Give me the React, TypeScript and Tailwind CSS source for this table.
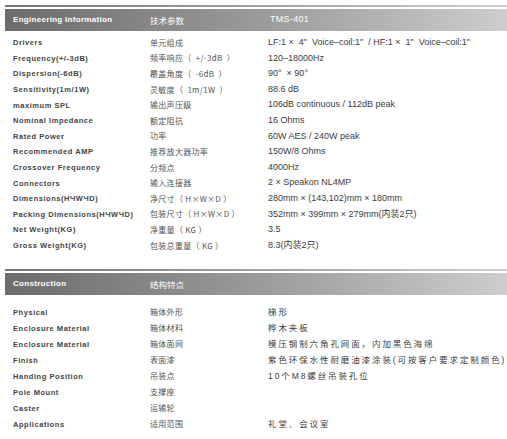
const specs: [string, string, string][] = [
  ["Drivers", "单元组成", "LF:1 ×  4\"  Voice–coil:1\"  / HF:1 ×  1\"  Voice–coil:1\""],
  ["Frequency(+/-3dB)", "频率响应（  +/-3dB  ）", "120–18000Hz"],
  ["Dispersion(-6dB)", "覆盖角度（  -6dB  ）", "90°  × 90°"],
  ["Sensitivity(1m/1W)", "灵敏度（  1m/1W  ）", "88.6 dB"],
  ["maximum SPL", "输出声压级", "106dB continuous / 112dB peak"],
  ["Nominal Impedance", "额定阻抗", "16 Ohms"],
  ["Rated Power", "功率", "60W AES / 240W peak"],
  ["Recommended  AMP", "推荐放大器功率", "150W/8 Ohms"],
  ["Crossover Frequency", "分频点", "4000Hz"],
  ["Connectors", "输入连接器", "2 × Speakon NL4MP"],
  ["Dimensions(HЧWЧD)", "净尺寸（ H×W×D ）", "280mm × (143,102)mm × 180mm"],
  ["Packing Dimensions(HЧWЧD)", "包装尺寸（ H×W×D ）", "352mm × 399mm × 279mm(内装2只)"],
  ["Net Weight(KG)", "净重量（ KG ）", "3.5"],
  ["Gross Weight(KG)", "包装总重量（ KG ）", "8.3(内装2只)"],
];

const construction: [string, string, string][] = [
  ["Physical", "箱体外形", "梯形"],
  ["Enclosure Material", "箱体材料", "桦木夹板"],
  ["Enclosure Material", "箱体面网", "模压钢制六角孔网面，内加黑色海绵"],
  ["Finish", "表面漆", "紫色环保水性耐磨油漆涂装(可按客户要求定制颜色)"],
  ["Handing Position", "吊装点", "10个M8螺丝吊装孔位"],
  ["Pole Mount", "支撑座", ""],
  ["Caster", "运输轮", ""],
  ["Applications", "适用范围", "礼堂、会议室"],
];

function SectionHeader({ en, zh, model }: { en: string; zh: string; model?: string }) {
  return (
    <div>
      <div className="h-[2px] bg-gradient-to-r from-[#767676] via-[#a0a0a0] to-[#cfcfcf]" />
      <div className="mt-[2px] flex h-[22px] items-center bg-gradient-to-r from-[#6c6c6c] via-[#9a9a9a] to-[#cdcdcd] text-white">
        <div className="w-[145px] pl-[8px] text-[8px] font-bold tracking-[0.3px] font-['Liberation_Sans',Arial,sans-serif]">
          {en}
        </div>
        <div className="w-[120px] text-[8.5px] font-['Noto_Sans_CJK_SC',sans-serif]">{zh}</div>
        {model && (
          <div className="text-[9px] tracking-[0.3px] font-['Liberation_Sans',Arial,sans-serif]">{model}</div>
        )}
      </div>
    </div>
  );
}

function Row({ row, h, wide }: { row: [string, string, string]; h: string; wide?: boolean }) {
  return (
    <div className={`flex items-center ${h}`}>
      <div className="w-[145px] pl-[8px] text-[7.5px] font-bold tracking-[0.55px] text-[#444] font-['Liberation_Sans','DejaVu_Sans',sans-serif]">
        {row[0]}
      </div>
      <div className="w-[118px] whitespace-pre text-[8px] tracking-[0.3px] text-[#555] font-['Noto_Sans_CJK_SC',sans-serif]">
        {row[1]}
      </div>
      <div
        className={`whitespace-pre text-[#3c3c3c] font-['Liberation_Sans','Noto_Sans_CJK_SC',sans-serif] ${
          wide ? "text-[8.5px] tracking-[1.9px]" : "text-[9px]"
        }`}
      >
        {row[2]}
      </div>
    </div>
  );
}

export default function App() {
  return (
    <div className="h-[439px] w-[507px] overflow-hidden bg-white pl-[5px] pt-[5px]">
      <SectionHeader en="Engineering Information" zh="技术参数" model="TMS-401" />
      <div className="mt-[4px]">
        {specs.map((r, i) => (
          <Row key={i} row={r} h="h-[15.6px]" />
        ))}
      </div>
      <div className="mt-[16px]">
        <SectionHeader en="Construction" zh="结构特点" />
      </div>
      <div className="mt-[9px]">
        {construction.map((r, i) => (
          <Row key={i} row={r} h="h-[16px]" wide />
        ))}
      </div>
    </div>
  );
}
